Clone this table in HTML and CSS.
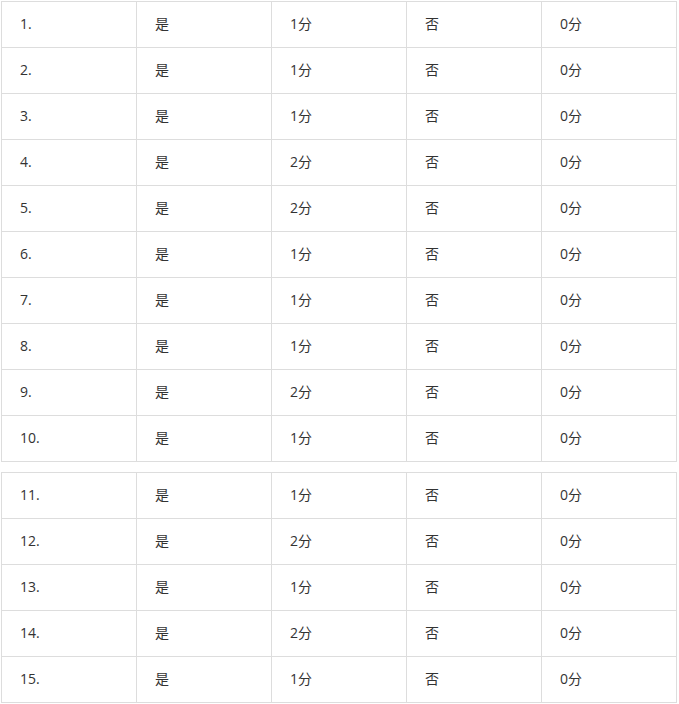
FILE: index.html
```html
<!DOCTYPE html>
<html lang="zh">
<head>
<meta charset="utf-8">
<link rel="stylesheet" href="styles.css">
</head>
<body>
<div class="page">
  <div class="score-table">
    <div class="cell">1.</div><div class="cell">是</div><div class="cell">1分</div><div class="cell">否</div><div class="cell">0分</div>
    <div class="cell">2.</div><div class="cell">是</div><div class="cell">1分</div><div class="cell">否</div><div class="cell">0分</div>
    <div class="cell">3.</div><div class="cell">是</div><div class="cell">1分</div><div class="cell">否</div><div class="cell">0分</div>
    <div class="cell">4.</div><div class="cell">是</div><div class="cell">2分</div><div class="cell">否</div><div class="cell">0分</div>
    <div class="cell">5.</div><div class="cell">是</div><div class="cell">2分</div><div class="cell">否</div><div class="cell">0分</div>
    <div class="cell">6.</div><div class="cell">是</div><div class="cell">1分</div><div class="cell">否</div><div class="cell">0分</div>
    <div class="cell">7.</div><div class="cell">是</div><div class="cell">1分</div><div class="cell">否</div><div class="cell">0分</div>
    <div class="cell">8.</div><div class="cell">是</div><div class="cell">1分</div><div class="cell">否</div><div class="cell">0分</div>
    <div class="cell">9.</div><div class="cell">是</div><div class="cell">2分</div><div class="cell">否</div><div class="cell">0分</div>
    <div class="cell">10.</div><div class="cell">是</div><div class="cell">1分</div><div class="cell">否</div><div class="cell">0分</div>
  </div>
  <div class="score-table">
    <div class="cell">11.</div><div class="cell">是</div><div class="cell">1分</div><div class="cell">否</div><div class="cell">0分</div>
    <div class="cell">12.</div><div class="cell">是</div><div class="cell">2分</div><div class="cell">否</div><div class="cell">0分</div>
    <div class="cell">13.</div><div class="cell">是</div><div class="cell">1分</div><div class="cell">否</div><div class="cell">0分</div>
    <div class="cell">14.</div><div class="cell">是</div><div class="cell">2分</div><div class="cell">否</div><div class="cell">0分</div>
    <div class="cell">15.</div><div class="cell">是</div><div class="cell">1分</div><div class="cell">否</div><div class="cell">0分</div>
  </div>
</div>
</body>
</html>
```

FILE: styles.css
```css
html, body {
  margin: 0;
  padding: 0;
  background: #ffffff;
}
.page {
  padding: 1px 0 0 1px;
  display: flex;
  flex-direction: column;
  gap: 10px;
  font-family: "Open Sans", "Noto Sans CJK SC", sans-serif;
  font-size: 14px;
  line-height: 20px;
  color: #333333;
}
.score-table {
  display: grid;
  grid-template-columns: repeat(5, 135px);
  grid-auto-rows: 46px;
  width: max-content;
  border-right: 1px solid #dddddd;
  border-bottom: 1px solid #dddddd;
}
.cell {
  border-left: 1px solid #dddddd;
  border-top: 1px solid #dddddd;
  padding: 0 0 1px 18px;
  display: flex;
  align-items: center;
}
```
